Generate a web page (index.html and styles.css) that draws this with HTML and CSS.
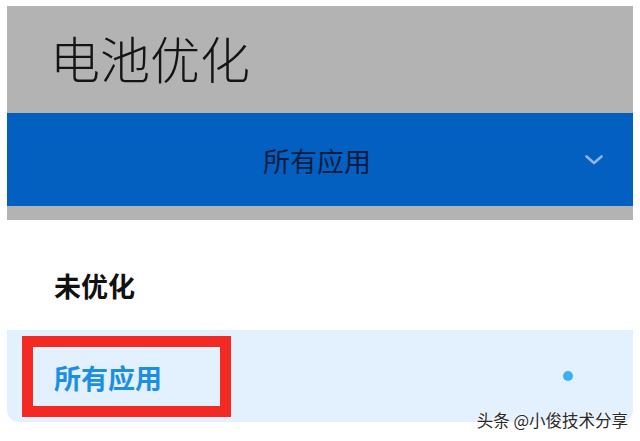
FILE: index.html
```html
<!DOCTYPE html>
<html lang="zh-CN">
<head>
<meta charset="utf-8">
<title>电池优化</title>
<link rel="stylesheet" href="styles.css">
</head>
<body>
<div class="screen">
  <header class="top">
    <h1 class="title">电池优化</h1>
    <div class="dropdown">
      <span></span>
      <span class="dropdown-label">所有应用</span>
      <svg class="chevron" width="18" height="10" viewBox="0 0 18 10" aria-hidden="true">
        <path d="M1.5 1.5 L9 8 L16.5 1.5" fill="none" stroke="#8fb4e4" stroke-width="2.6" stroke-linecap="round" stroke-linejoin="round"/>
      </svg>
    </div>
    <div class="strip"></div>
  </header>
  <ul class="options">
    <li class="option">未优化</li>
    <li class="option selected">
      <span class="mark"><span class="mark-text">所有应用</span></span>
      <span class="dot"></span>
    </li>
  </ul>
  <div class="watermark">头条 @小俊技术分享</div>
</div>
</body>
</html>
```
FILE: styles.css
```css
html, body {
  margin: 0;
  padding: 0;
  background: #ffffff;
}
body {
  font-family: "Noto Sans CJK SC", "Noto Sans", sans-serif;
  width: 640px;
  height: 441px;
  overflow: hidden;
}
.screen {
  position: relative;
  padding: 6px 7px 0 7px;
  height: 435px;
}
.top {
  background: #b3b3b3;
}
.title {
  margin: 0;
  padding: 26px 0 31px 43px;
  font-size: 50px;
  line-height: 50px;
  font-weight: 300;
  color: #141414;
}
.dropdown {
  height: 93px;
  background: #0360c1;
  display: grid;
  grid-template-columns: 1fr auto 1fr;
  align-items: center;
  padding-right: 30px;
  padding-left: 30px;
}
.dropdown-label {
  font-size: 27px;
  line-height: 27px;
  color: #0b1d40;
  padding-top: 2px;
  margin-right: 6px;
}
.chevron {
  justify-self: end;
  display: block;
}
.strip {
  height: 14px;
}
.options {
  list-style: none;
  margin: 0;
  padding: 0;
}
.option {
  font-size: 27px;
  line-height: 27px;
  font-weight: 700;
  color: #111111;
  padding: 52px 0 31px 47px;
}
.option.selected {
  padding: 0 60px 0 15px;
  height: 92px;
  box-sizing: border-box;
  background: #e3f0fd;
  border-radius: 0 0 12px 12px;
  display: flex;
  align-items: center;
  justify-content: space-between;
  color: #1a8fe3;
}
.mark {
  display: block;
  border: 11px solid #f32a24;
  padding: 17px 0 0 21px;
  width: 166px;
  height: 42px;
  margin-top: 1px;
}
.mark-text {
  display: block;
}
.dot {
  width: 10px;
  height: 10px;
  border-radius: 50%;
  background: #38b0f2;
}
.watermark {
  position: absolute;
  right: 12px;
  top: 409px;
  font-size: 16.5px;
  line-height: 22px;
  color: #2a2a2a;
  text-shadow: 0 0 2px #ffffff, 0 0 2px #ffffff;
}
```
